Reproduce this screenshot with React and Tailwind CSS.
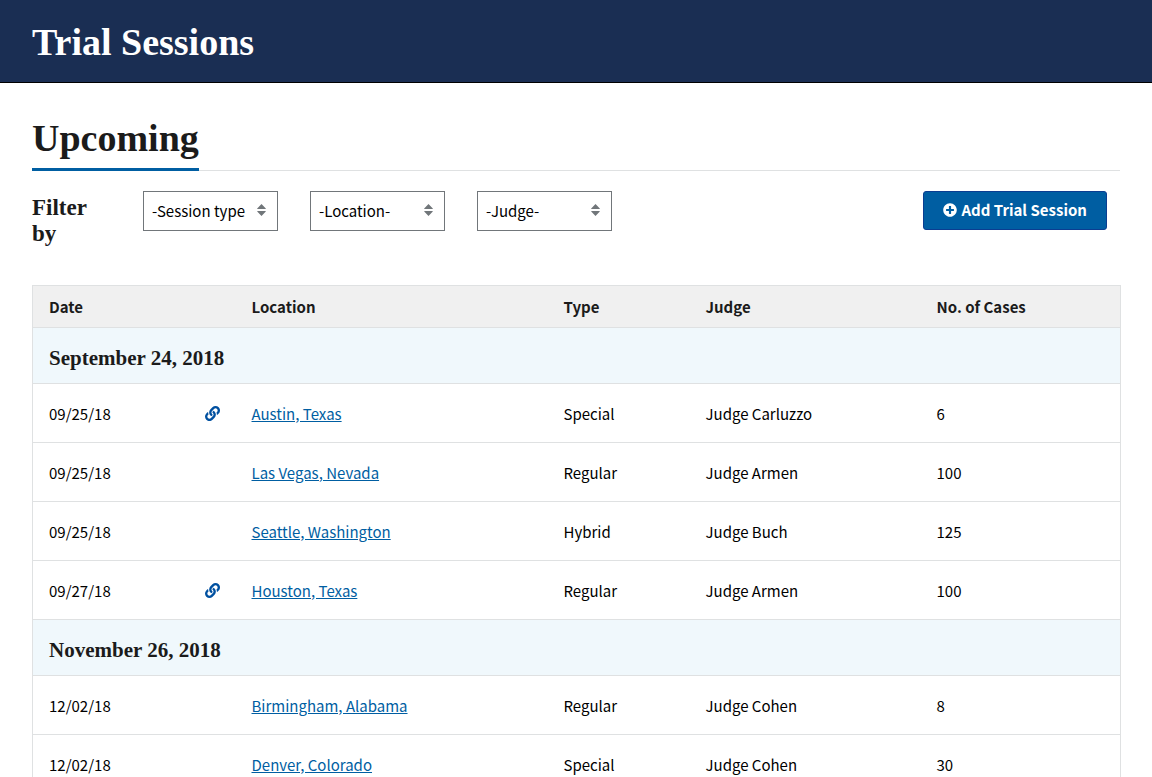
import { FaLink, FaPlusCircle } from "react-icons/fa";

const groups = [
  {
    label: "September 24, 2018",
    sessions: [
      { date: "09/25/18", linked: true, location: "Austin, Texas", type: "Special", judge: "Judge Carluzzo", cases: 6 },
      { date: "09/25/18", location: "Las Vegas, Nevada", type: "Regular", judge: "Judge Armen", cases: 100 },
      { date: "09/25/18", location: "Seattle, Washington", type: "Hybrid", judge: "Judge Buch", cases: 125 },
      { date: "09/27/18", linked: true, location: "Houston, Texas", type: "Regular", judge: "Judge Armen", cases: 100 },
    ],
  },
  {
    label: "November 26, 2018",
    sessions: [
      { date: "12/02/18", location: "Birmingham, Alabama", type: "Regular", judge: "Judge Cohen", cases: 8 },
      { date: "12/02/18", location: "Denver, Colorado", type: "Special", judge: "Judge Cohen", cases: 30 },
    ],
  },
];

function FilterSelect({ name, placeholder, options }) {
  return (
    <div className="relative w-[135px]">
      <select
        aria-label={name}
        defaultValue=""
        className="block h-10 w-full appearance-none border border-[#71767a] bg-white pl-2 pr-6 text-[15px] leading-6 text-black"
      >
        <option value="">{placeholder}</option>
        {options.map((o) => (
          <option key={o}>{o}</option>
        ))}
      </select>
      <svg
        viewBox="0 0 9 12"
        aria-hidden="true"
        className="pointer-events-none absolute right-3 top-[13px] h-3 w-[9px] fill-[#71767a]"
      >
        <path d="M4.5 0 8.8 4.4Q9 5 8.4 5H.6Q0 5 .2 4.4ZM4.5 12 8.8 7.6Q9 7 8.4 7H.6Q0 7 .2 7.6Z" />
      </svg>
    </div>
  );
}

export default function App() {
  return (
    <div className="h-screen overflow-hidden bg-white font-['Noto_Sans_CJK_JP','Noto_Sans',sans-serif] text-[15px] leading-6 text-[#1b1b1b]">
      <header className="border-b border-black bg-[#1a2e53] px-8 pb-[18px] pt-5">
        <h1 className="font-['Source_Serif_Pro','Liberation_Serif',serif] text-[38px] font-bold leading-[44px] text-white">Trial Sessions</h1>
      </header>
      <main className="px-8 pt-8">
        <div className="flex border-b border-[#dfe1e2]">
          <h2 className="-mb-px border-b-3 border-[#005ea2] pb-[7px] font-['Source_Serif_Pro','Liberation_Serif',serif] text-[38px] font-bold leading-[46px]">
            Upcoming
          </h2>
        </div>
        <div className="mt-5 flex items-start gap-8 pr-[13px]">
          <h3 className="w-[79px] pt-1 font-['Source_Serif_Pro','Liberation_Serif',serif] text-[23px] font-bold leading-[26px]">
            Filter by
          </h3>
          <FilterSelect name="Session type" placeholder="-Session type" options={["Regular", "Small", "Hybrid", "Special"]} />
          <FilterSelect name="Location" placeholder="-Location-" options={["Austin, Texas", "Denver, Colorado"]} />
          <FilterSelect name="Judge" placeholder="-Judge-" options={["Armen", "Buch", "Carluzzo", "Cohen"]} />
          <button
            type="button"
            className="ml-auto flex h-[39px] items-center gap-1 rounded-[3px] border border-[#0b3d91] bg-[#005ea2] px-[19px] pb-px font-bold text-white"
          >
            <FaPlusCircle className="size-[14px]" aria-hidden="true" />
            Add Trial Session
          </button>
        </div>
        <table className="mt-[38px] w-full table-fixed border-collapse border border-[#dfe1e2] text-left text-black">
          <colgroup>
            <col className="w-[156px]" />
            <col className="w-[47px]" />
            <col className="w-[312px]" />
            <col className="w-[142px]" />
            <col className="w-[231px]" />
            <col className="w-[200px]" />
          </colgroup>
          <thead>
            <tr className="h-[42px] border-b border-[#dfe1e2] bg-[#f0f0f0] text-[#1b1b1b]">
              <th className="px-4 font-bold">Date</th>
              <td />
              <th className="px-4 font-bold">Location</th>
              <th className="px-4 font-bold">Type</th>
              <th className="px-4 font-bold">Judge</th>
              <th className="px-4 font-bold">No. of Cases</th>
            </tr>
          </thead>
          {groups.map((group) => (
            <tbody key={group.label}>
              <tr className="h-14 border-b border-[#dfe1e2] bg-[#f0f8fc]">
                <th colSpan={6} className="px-4 pt-1 font-['Source_Serif_Pro','Liberation_Serif',serif] text-[21px] font-bold text-[#1b1b1b]">
                  {group.label}
                </th>
              </tr>
              {group.sessions.map((s) => (
                <tr key={s.location} className="h-[59px] border-b border-[#dfe1e2]">
                  <td className="px-4 pt-px">{s.date}</td>
                  <td className="px-4 pt-px">{s.linked && <FaLink className="size-[15px] text-[#0050a0]" aria-label="Linked session" />}</td>
                  <td className="px-4 pt-px">
                    <a href="#" className="text-[#005ea2] underline">
                      {s.location}
                    </a>
                  </td>
                  <td className="px-4 pt-px">{s.type}</td>
                  <td className="px-4 pt-px">{s.judge}</td>
                  <td className="px-4 pt-px">{s.cases}</td>
                </tr>
              ))}
            </tbody>
          ))}
        </table>
      </main>
    </div>
  );
}
